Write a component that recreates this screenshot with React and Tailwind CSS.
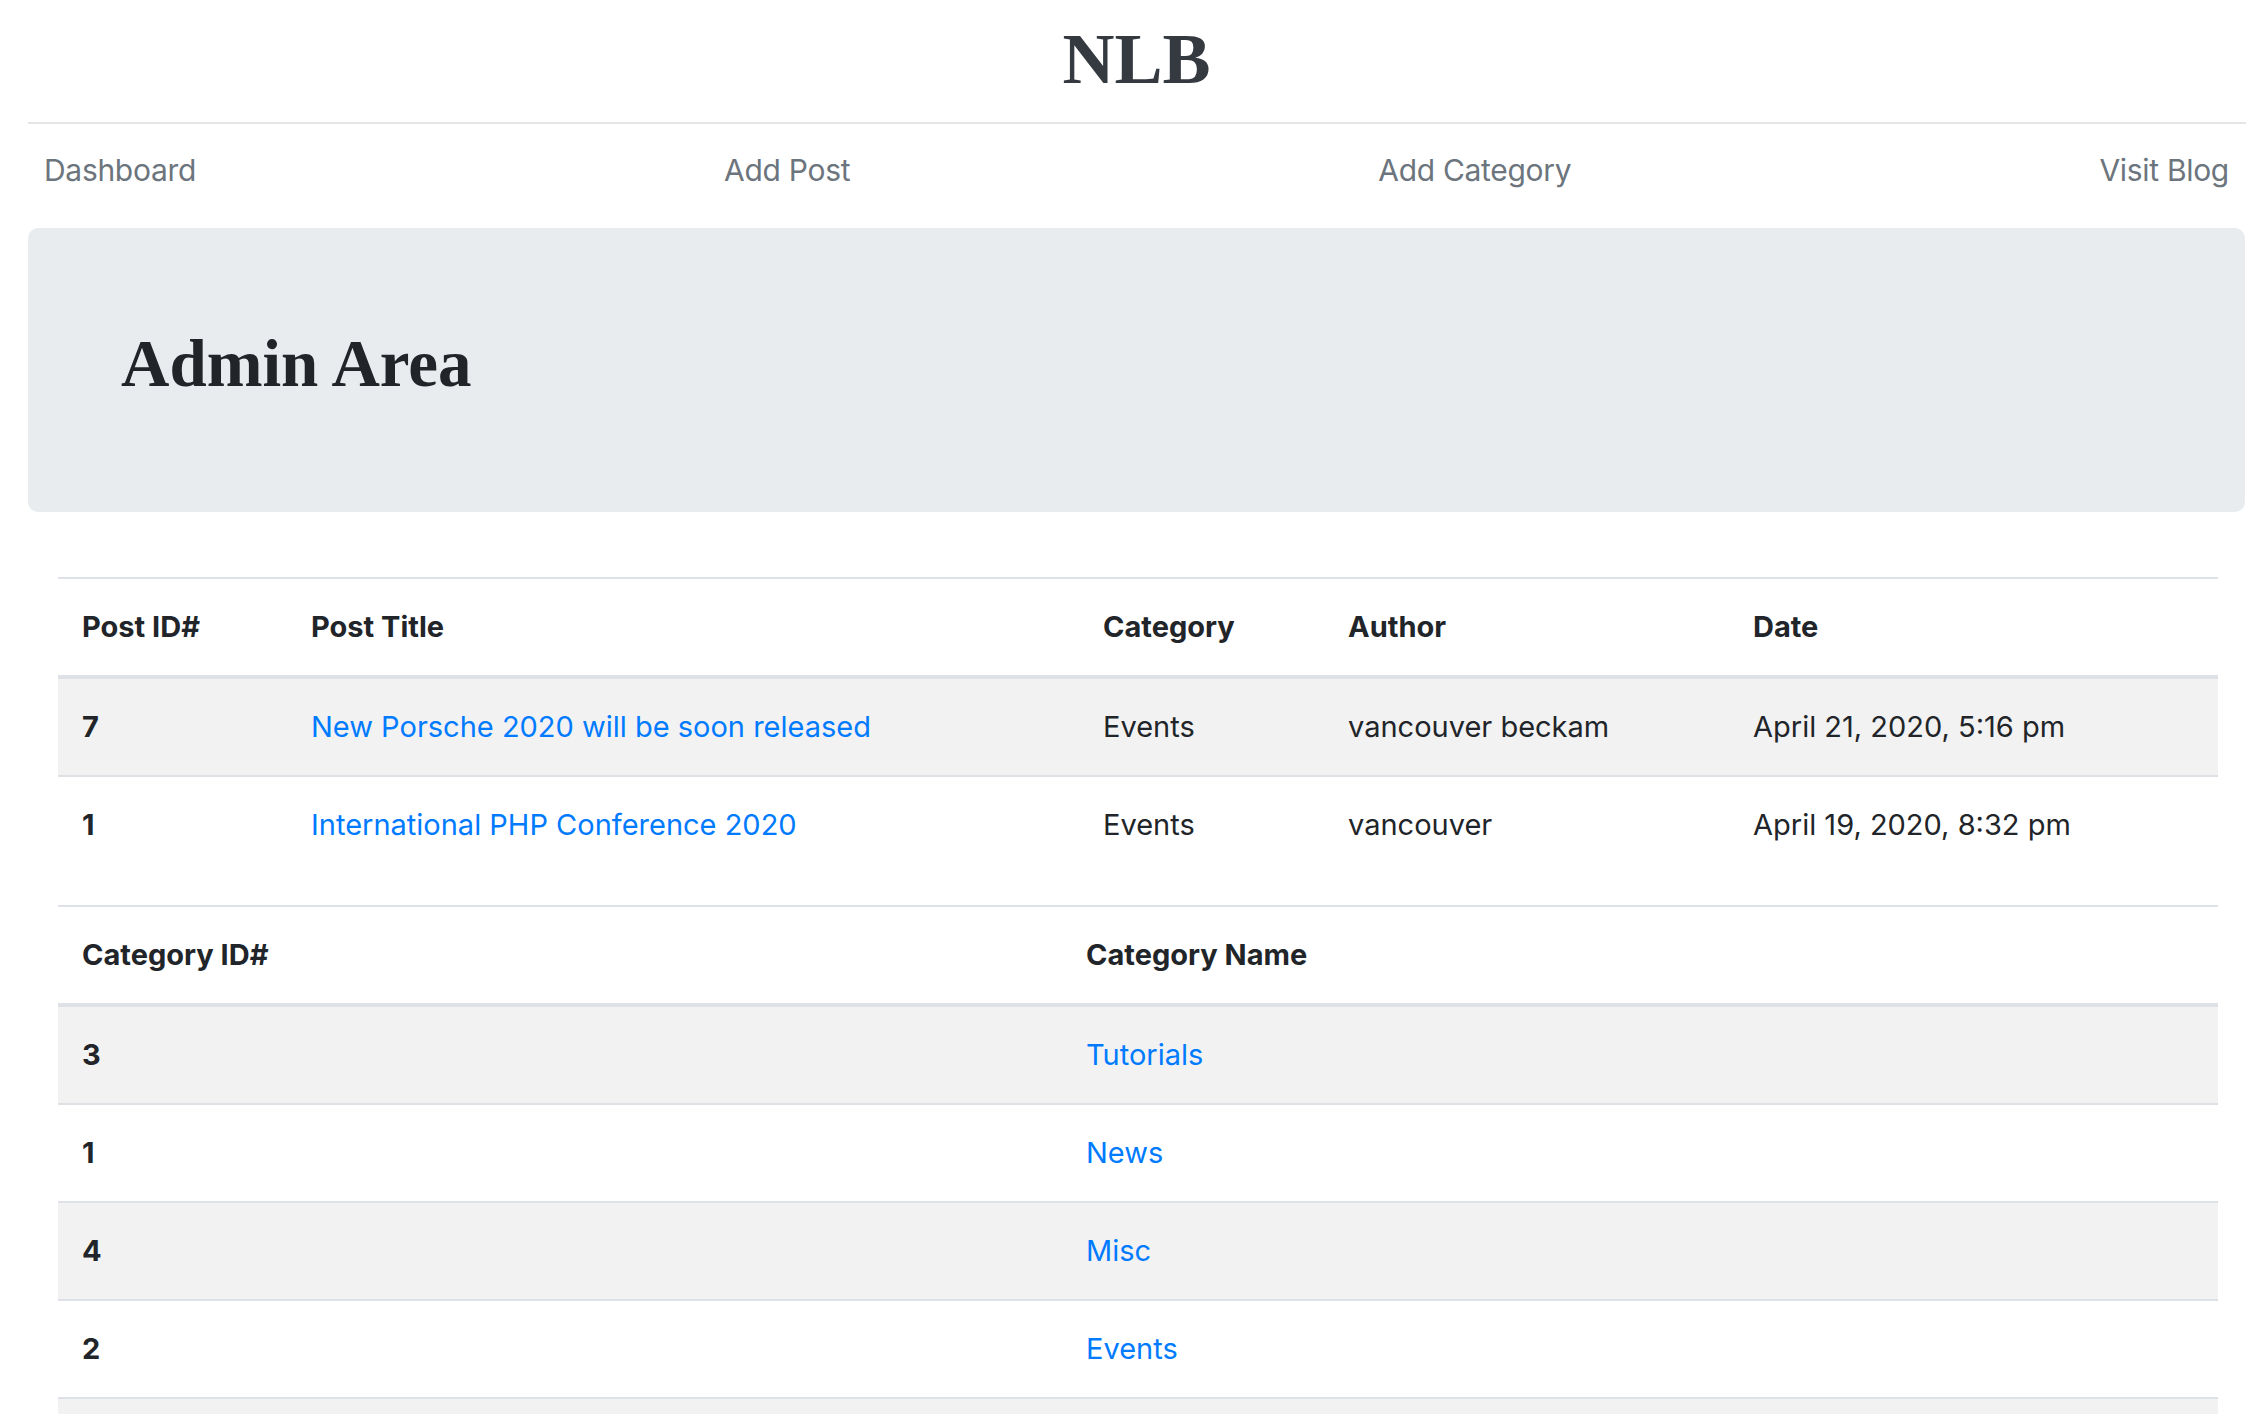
import React from "react";

const posts = [
  {
    id: 7,
    title: "New Porsche 2020 will be soon released",
    category: "Events",
    author: "vancouver beckam",
    date: "April 21, 2020, 5:16 pm",
  },
  {
    id: 1,
    title: "International PHP Conference 2020",
    category: "Events",
    author: "vancouver",
    date: "April 19, 2020, 8:32 pm",
  },
];

const categories = [
  { id: 3, name: "Tutorials" },
  { id: 1, name: "News" },
  { id: 4, name: "Misc" },
  { id: 2, name: "Events" },
  { id: null, name: "" },
];

const links = ["Dashboard", "Add Post", "Add Category", "Visit Blog"];

const serif = "font-['Liberation_Serif','Times_New_Roman',serif]";

function Th({ children, className = "" }) {
  return (
    <th
      className={`text-left align-bottom px-[24px] py-[24px] leading-[48px] font-bold border-t-2 border-b-4 border-[#dee2e6] ${className}`}
    >
      {children}
    </th>
  );
}

function Td({ children, bold = false }) {
  return (
    <td
      className={`align-top px-[24px] py-[24px] leading-[48px] border-t-2 border-[#dee2e6] ${
        bold ? "font-bold" : ""
      }`}
    >
      {children}
    </td>
  );
}

export default function App() {
  return (
    <div className="min-h-screen bg-white text-[#212529] font-['Inter','Noto_Sans',sans-serif] overflow-hidden">
      <div className="ml-[28px] w-[2217px]">
        {/* header */}
        <header className="pt-[23px] pb-[27px] border-b-2 border-[#e5e5e5] -mr-[40px] pr-[40px]">
          <div
            className={`${serif} text-center text-[72px] leading-none font-bold text-[#343a40]`}
          >
            NLB
          </div>
        </header>

        {/* nav */}
        <nav className="flex justify-between pt-[22px] pb-[34px]">
          {links.map((l) => (
            <a
              key={l}
              href="#"
              className="px-[16px] text-[30px] tracking-[-0.3px] leading-[48px] text-[#6c757d]"
            >
              {l}
            </a>
          ))}
        </nav>

        {/* jumbotron */}
        <div className="h-[284px] bg-[#e9ecef] rounded-[10px] pl-[93px] pt-[95px]">
          <h1
            className={`${serif} text-[67px] leading-[1.2] font-bold text-[#212529]`}
          >
            Admin Area
          </h1>
        </div>

        {/* tables */}
        <div className="ml-[30px] w-[2160px] mt-[65px] text-[29px]">
          <table className="w-full mb-[32px] table-fixed">
            <thead>
              <tr>
                <Th className="w-[229px]">Post ID#</Th>
                <Th className="w-[792px]">Post Title</Th>
                <Th className="w-[245px]">Category</Th>
                <Th className="w-[405px]">Author</Th>
                <Th>Date</Th>
              </tr>
            </thead>
            <tbody>
              {posts.map((p, i) => (
                <tr key={p.id} className={i % 2 === 0 ? "bg-[#f2f2f2]" : ""}>
                  <Td bold>{p.id}</Td>
                  <Td>
                    <a href="#" className="text-[#007bff]">
                      {p.title}
                    </a>
                  </Td>
                  <Td>{p.category}</Td>
                  <Td>{p.author}</Td>
                  <Td>{p.date}</Td>
                </tr>
              ))}
            </tbody>
          </table>

          <table className="w-full mb-[32px] table-fixed">
            <thead>
              <tr>
                <Th className="w-[1004px]">Category ID#</Th>
                <Th>Category Name</Th>
              </tr>
            </thead>
            <tbody>
              {categories.map((c, i) => (
                <tr key={i} className={i % 2 === 0 ? "bg-[#f2f2f2]" : ""}>
                  <Td bold>{c.id}</Td>
                  <Td>
                    <a href="#" className="text-[#007bff]">
                      {c.name}
                    </a>
                  </Td>
                </tr>
              ))}
            </tbody>
          </table>
        </div>
      </div>
    </div>
  );
}
